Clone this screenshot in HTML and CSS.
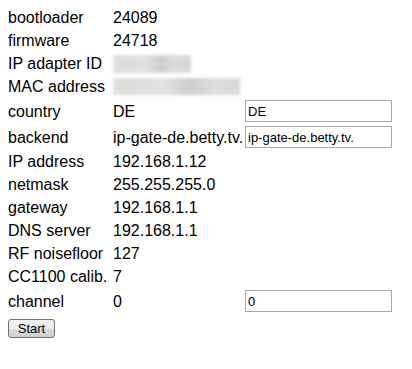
FILE: index.html
```html
<!DOCTYPE html>
<html>

<head>
    <link rel="stylesheet" href="styles.css">
</head>

<body>
    <form class="setup">
        <table class="info">
            <tr>
                <td class="key">bootloader</td>
                <td class="val">24089</td>
                <td></td>
            </tr>
            <tr>
                <td class="key">firmware</td>
                <td class="val">24718</td>
                <td></td>
            </tr>
            <tr>
                <td class="key">IP adapter ID</td>
                <td class="val"><div class="blurred short"></div></td>
                <td></td>
            </tr>
            <tr>
                <td class="key">MAC address</td>
                <td class="val"><div class="blurred long"></div></td>
                <td></td>
            </tr>
            <tr class="edit">
                <td class="key">country</td>
                <td class="val">DE</td>
                <td><input type="text" name="country" value="DE"></td>
            </tr>
            <tr class="edit">
                <td class="key">backend</td>
                <td class="val">ip-gate-de.betty.tv.</td>
                <td><input type="text" name="backend" value="ip-gate-de.betty.tv."></td>
            </tr>
            <tr>
                <td class="key">IP address</td>
                <td class="val">192.168.1.12</td>
                <td></td>
            </tr>
            <tr>
                <td class="key">netmask</td>
                <td class="val">255.255.255.0</td>
                <td></td>
            </tr>
            <tr>
                <td class="key">gateway</td>
                <td class="val">192.168.1.1</td>
                <td></td>
            </tr>
            <tr>
                <td class="key">DNS server</td>
                <td class="val">192.168.1.1</td>
                <td></td>
            </tr>
            <tr>
                <td class="key">RF noisefloor</td>
                <td class="val">127</td>
                <td></td>
            </tr>
            <tr>
                <td class="key">CC1100 calib.</td>
                <td class="val">7</td>
                <td></td>
            </tr>
            <tr class="edit">
                <td class="key">channel</td>
                <td class="val">0</td>
                <td><input type="text" name="channel" value="0"></td>
            </tr>
        </table>
        <button type="button" class="start">Start</button>
    </form>
</body>

</html>
```

FILE: styles.css
```css
body {
    margin: 0;
    padding: 6px 8px;
    font-family: "Liberation Sans", Arial, sans-serif;
    font-size: 16px;
    color: #000;
    background: #fff;
}

.info {
    border-collapse: collapse;
}

.info td {
    padding: 0;
    height: 23px;
    line-height: 23px;
    vertical-align: middle;
    white-space: nowrap;
}

.info tr.edit td {
    height: 26px;
}

.key {
    width: 105px;
}

.val {
    width: 132px;
}

.blurred {
    height: 18px;
    background: linear-gradient(90deg, #e6e0d8 0%, #dcdcdc 10%, #e2e2e2 40%, #cfcfcf 60%, #dddddd 80%, #d8d8d8 100%);
    filter: blur(1.5px);
}

.blurred.short {
    width: 78px;
}

.blurred.long {
    width: 127px;
    height: 17px;
}

.info input {
    box-sizing: border-box;
    width: 147px;
    height: 22px;
    margin: 0;
    padding: 1px 2px;
    border: 1px solid #a9a9a9;
    font-family: "Liberation Sans", Arial, sans-serif;
    font-size: 13px;
    color: #000;
    display: block;
}

.start {
    margin-top: 5px;
    width: 47px;
    height: 19px;
    padding: 0;
    border: 1px solid #707070;
    border-radius: 3px;
    background: linear-gradient(#f2f2f2 0%, #ebebeb 50%, #dddddd 51%, #cfcfcf 100%);
    font-family: "Liberation Sans", Arial, sans-serif;
    font-size: 13px;
    color: #000;
}
```
